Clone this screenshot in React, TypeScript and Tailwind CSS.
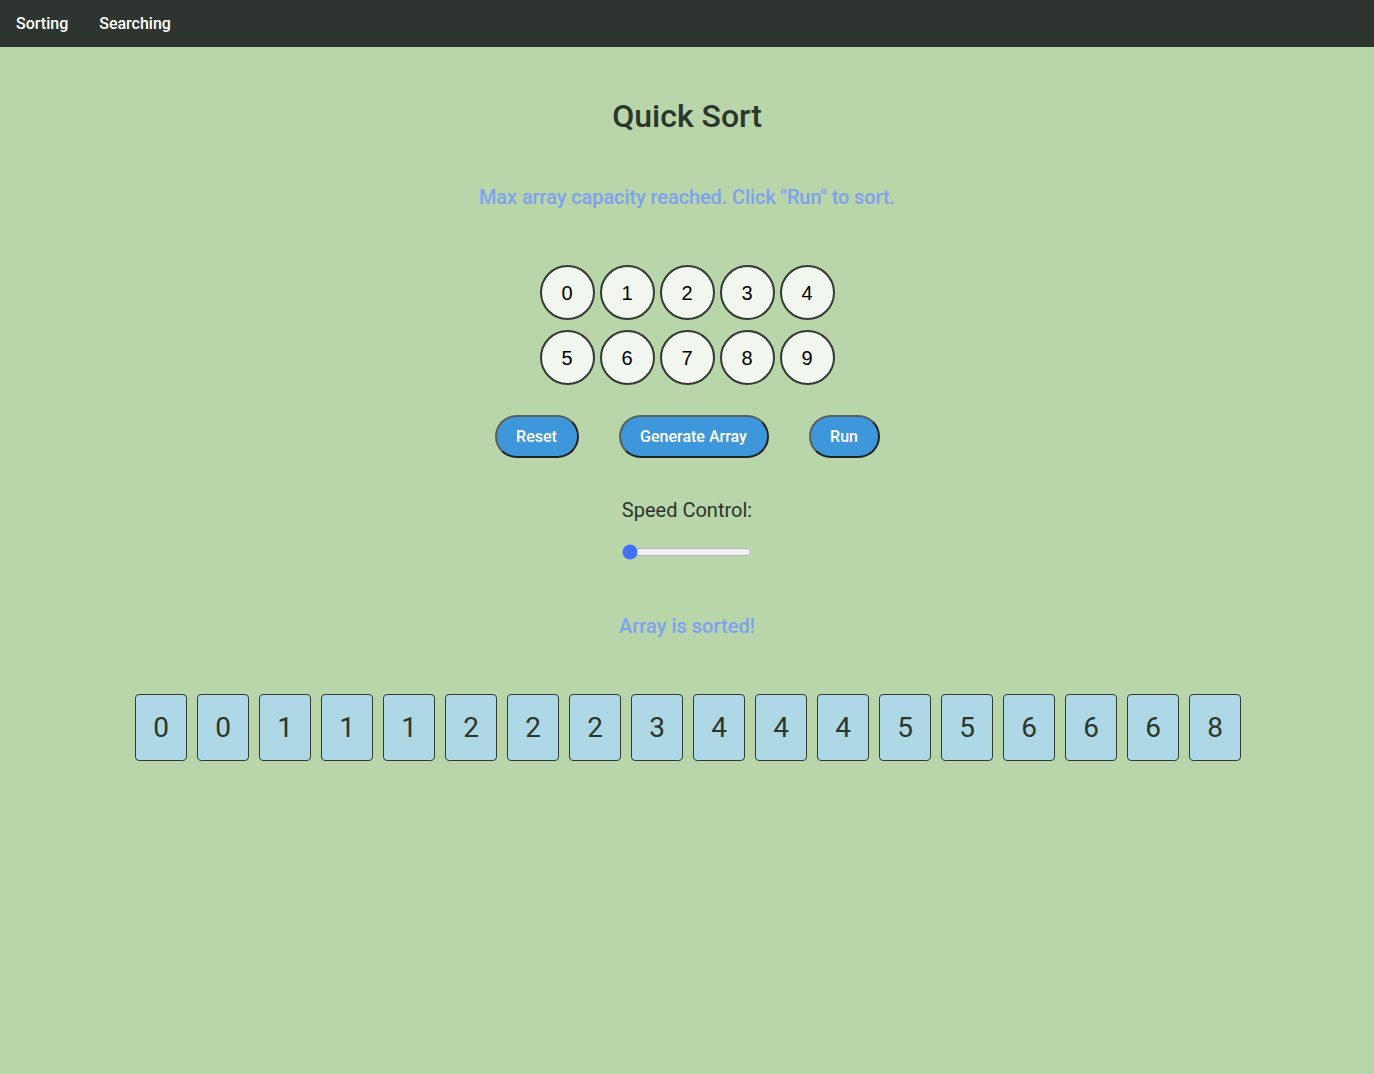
import React from "react";

const circles = [
  [0, 1, 2, 3, 4],
  [5, 6, 7, 8, 9],
];
const bars = [0, 0, 1, 1, 1, 2, 2, 2, 3, 4, 4, 4, 5, 5, 6, 6, 6, 8];

export default function App() {
  return (
    <div className="min-h-[1074px] w-full bg-[#b9d5aa] font-['Roboto',sans-serif] text-[#2b362c]">
      <nav className="flex h-[47px] items-center bg-[#2e3530] px-4 text-[16px] font-medium text-white">
        <span>Sorting</span>
        <span className="ml-[31px]">Searching</span>
      </nav>
      <div className="flex flex-col items-center">
        <h1 className="mt-[51px] h-[37px] text-[32px] font-medium leading-[37px]">Quick Sort</h1>
        <p className="mt-[50px] h-[24px] text-[20px] font-medium tracking-[-0.1px] leading-[24px] text-[#7fa2ec]">
          Max array capacity reached. Click "Run" to sort.
        </p>
        <div className="mt-[56px] flex flex-col gap-[10px]">
          {circles.map((row, i) => (
            <div key={i} className="flex gap-[5px]">
              {row.map((n) => (
                <div
                  key={n}
                  className="flex h-[55px] w-[55px] items-center justify-center rounded-full border-2 border-[#333833] bg-[#f1f6ee] font-['Liberation_Sans',sans-serif] text-[20px] text-black"
                >
                  {n}
                </div>
              ))}
            </div>
          ))}
        </div>
        <div className="mt-[30px] flex gap-[40px]">
          {[
            ["Reset", "w-[84px]"],
            ["Generate Array", "w-[150px]"],
            ["Run", "w-[71px]"],
          ].map(([label, w]) => (
            <button
              key={label}
              className={`${w} h-[43px] rounded-full border-2 border-[#5a5f5a] border-b-[#222] border-r-[#222] bg-[#3e97db] text-[16px] font-medium text-white`}
            >
              {label}
            </button>
          ))}
        </div>
        <p className="mt-[40px] text-[20px] leading-[24px]">Speed Control:</p>
        <input type="range" className="mt-[22px] w-[130px] accent-[#4070f4]" defaultValue={0} />
        <p className="mt-[54px] text-[20px] font-medium leading-[24px] text-[#7fa2ec]">Array is sorted!</p>
        <div className="mt-[56px] ml-[2px] flex gap-[10px]">
          {bars.map((n, i) => (
            <div
              key={i}
              className="flex h-[67px] w-[52px] items-center justify-center rounded-[4px] border border-[#333833] bg-[#afd8e6] text-[28px] text-[#2b362c]"
            >
              {n}
            </div>
          ))}
        </div>
      </div>
    </div>
  );
}
